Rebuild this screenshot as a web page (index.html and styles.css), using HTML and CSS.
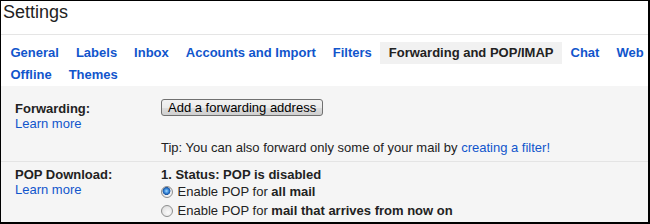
FILE: index.html
```html
<!DOCTYPE html>
<html lang="en">

<head>
    <meta charset="UTF-8">
    <meta name="viewport" content="width=device-width, initial-scale=1.0">
    <title>Settings</title>
    <link rel="stylesheet" href="styles.css">
</head>

<body>
    <div class="page">
        <h1 class="title">Settings</h1>

        <div class="tabs">
            <div class="tab-row">
                <a class="tab" href="#">General</a>
                <a class="tab" href="#">Labels</a>
                <a class="tab" href="#">Inbox</a>
                <a class="tab" href="#">Accounts and Import</a>
                <a class="tab" href="#">Filters</a>
                <span class="tab selected">Forwarding and POP/IMAP</span>
                <a class="tab" href="#">Chat</a>
                <a class="tab last" href="#">Web</a>
            </div>
            <div class="tab-row">
                <a class="tab" href="#">Offline</a>
                <a class="tab" href="#">Themes</a>
            </div>
        </div>

        <div class="content">
            <div class="section first">
                <div class="label">
                    <b>Forwarding:</b>
                    <a href="#">Learn more</a>
                </div>
                <div class="value">
                    <button class="btn">Add a forwarding address</button>
                    <div class="tip">Tip: You can also forward only some of your mail by <a href="#">creating a filter!</a></div>
                </div>
            </div>

            <div class="section second">
                <div class="label">
                    <b>POP Download:</b>
                    <a href="#">Learn more</a>
                </div>
                <div class="value">
                    <div class="status"><b>1. Status: POP is disabled</b></div>
                    <label class="opt"><input type="radio" name="pop" checked> Enable POP for <b>all mail</b></label>
                    <label class="opt"><input type="radio" name="pop"> Enable POP for <b>mail that arrives from now on</b></label>
                </div>
            </div>
        </div>
    </div>
</body>

</html>
```

FILE: styles.css
```css
body {
    margin: 0;
    font-family: "Liberation Sans", Arial, sans-serif;
    font-size: 13px;
    color: #222;
    background-color: white;
}

a {
    color: #15c;
    text-decoration: none;
}

.page {
    width: 650px;
    height: 224px;
    box-sizing: border-box;
    border-top: 1px solid #000;
    border-left: 1px solid #000;
    border-right: 2px solid #000;
    border-bottom: 2px solid #000;
    overflow: hidden;
    display: flex;
    flex-direction: column;
}

.title {
    margin: 0;
    padding: 1px 0 12px 2px;
    font-size: 18px;
    line-height: 20px;
    font-weight: normal;
    color: #222;
    border-bottom: 1px solid #e5e5e5;
}

/* tabs */
.tabs {
    padding-top: 7px;
}

.tab-row {
    display: flex;
    white-space: nowrap;
    padding-left: 1px;
}

.tab {
    padding: 0 8.5px;
    line-height: 22px;
    font-weight: bold;
}

.tab.last {
    padding-right: 0;
}

.selected {
    color: #222;
    background-color: #f1f1f1;
}

/* settings body */
.content {
    flex-grow: 1;
    background-color: #f5f5f5;
}

.section {
    display: grid;
    grid-template-columns: 146px 1fr;
    padding-left: 14px;
    line-height: 15px;
}

.label {
    display: flex;
    flex-direction: column;
}

.first {
    padding-top: 13px;
    padding-bottom: 6px;
    border-bottom: 1px solid #e4e4e4;
}

.first .label {
    padding-top: 2px;
}

.second {
    padding-top: 5px;
}

.btn {
    display: block;
    height: 17px;
    padding: 0 6px;
    margin: 0;
    font-family: "Liberation Sans", Arial, sans-serif;
    font-size: 13px;
    line-height: 15px;
    color: #000;
    border: 1px solid #707070;
    border-radius: 3px;
    background: linear-gradient(#f2f2f2 0%, #ebebeb 50%, #dddddd 51%, #cfcfcf 100%);
}

.tip {
    margin-top: 24px;
}

.opt {
    display: flex;
    align-items: center;
    height: 19px;
    white-space: pre;
}

.opt input {
    appearance: none;
    width: 12px;
    height: 12px;
    margin: 0 1px 0 0;
    border: 1px solid #8e8f8f;
    border-radius: 50%;
    box-sizing: border-box;
    background: radial-gradient(circle at 60% 65%, #fbfbfb 0%, #e6e6e6 60%, #cfcfcf 100%);
}

.opt input:checked {
    background:
        radial-gradient(circle at 45% 40%, #a8d8fa 0%, #3d8fe0 25%, #1b54a0 45%, transparent 52%),
        radial-gradient(circle at 60% 65%, #fbfbfb 0%, #e6e6e6 60%, #cfcfcf 100%);
}
```
